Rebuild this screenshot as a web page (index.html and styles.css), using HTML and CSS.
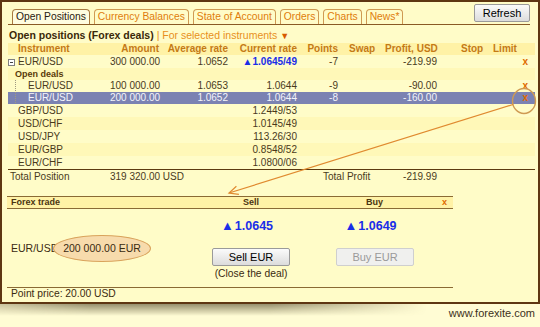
FILE: index.html
```html
<!DOCTYPE html>
<html lang="en">
<head>
    <meta charset="UTF-8">
    <title>Open Positions</title>
    <link rel="stylesheet" href="styles.css">
</head>
<body>
<div id="panel">
    <div id="tabBar">
        <div class="tab active">Open Positions</div>
        <div class="tab">Currency Balances</div>
        <div class="tab">State of Account</div>
        <div class="tab">Orders</div>
        <div class="tab">Charts</div>
        <div class="tab">News*</div>
        <button class="refresh">Refresh</button>
    </div>

    <div class="title"><b>Open positions (Forex deals)</b> <span class="filter">| For selected instruments <span class="caret">▼</span></span></div>

    <table class="positions">
        <colgroup>
            <col style="width:102px"><col style="width:53px"><col style="width:69px"><col style="width:69px">
            <col style="width:41px"><col style="width:43px"><col style="width:56px"><col style="width:47px"><col style="width:47px">
        </colgroup>
        <thead>
            <tr>
                <th class="name">Instrument</th>
                <th class="num">Amount</th>
                <th class="num">Average rate</th>
                <th class="num">Current rate</th>
                <th class="num">Points</th>
                <th class="swap">Swap</th>
                <th class="num">Profit, USD</th>
                <th class="stop">Stop</th>
                <th class="limit">Limit</th>
            </tr>
        </thead>
        <tbody>
            <tr class="main">
                <td class="name first"><span class="expander"></span>EUR/USD</td>
                <td class="num">300 000.00</td>
                <td class="num">1.0652</td>
                <td class="num rate-up">▲1.0645/49</td>
                <td class="num">-7</td>
                <td></td>
                <td class="num">-219.99</td>
                <td></td>
                <td class="close">x</td>
            </tr>
            <tr class="group alt">
                <td colspan="9" class="group-label">Open deals</td>
            </tr>
            <tr class="deal">
                <td class="name sub tree">EUR/USD</td>
                <td class="num">100 000.00</td>
                <td class="num">1.0653</td>
                <td class="num">1.0644</td>
                <td class="num">-9</td>
                <td></td>
                <td class="num">-90.00</td>
                <td></td>
                <td class="close">x</td>
            </tr>
            <tr class="deal selected">
                <td class="name sub tree">EUR/USD</td>
                <td class="num">200 000.00</td>
                <td class="num">1.0652</td>
                <td class="num">1.0644</td>
                <td class="num">-8</td>
                <td></td>
                <td class="num">-160.00</td>
                <td></td>
                <td class="close">x</td>
            </tr>
            <tr class="quote"><td class="name">GBP/USD</td><td></td><td></td><td class="num">1.2449/53</td><td colspan="5"></td></tr>
            <tr class="quote alt"><td class="name">USD/CHF</td><td></td><td></td><td class="num">1.0145/49</td><td colspan="5"></td></tr>
            <tr class="quote"><td class="name">USD/JPY</td><td></td><td></td><td class="num">113.26/30</td><td colspan="5"></td></tr>
            <tr class="quote alt"><td class="name">EUR/GBP</td><td></td><td></td><td class="num">0.8548/52</td><td colspan="5"></td></tr>
            <tr class="quote"><td class="name">EUR/CHF</td><td></td><td></td><td class="num">1.0800/06</td><td colspan="5"></td></tr>
        </tbody>
        <tfoot>
            <tr>
                <td class="total-label">Total Position</td>
                <td colspan="3">319 320.00 USD</td>
                <td colspan="2" class="profit-label">Total Profit</td>
                <td class="num">-219.99</td>
                <td colspan="2"></td>
            </tr>
        </tfoot>
    </table>

    <div id="trade">
        <div class="trade-head trade-grid">
            <span class="head-label">Forex trade</span>
            <span class="center">Sell</span>
            <span></span>
            <span class="center">Buy</span>
            <span class="head-close">x</span>
        </div>
        <div class="trade-rates trade-grid">
            <span></span>
            <span class="center big-rate"><span class="up">▲</span>1.0645</span>
            <span></span>
            <span class="center big-rate"><span class="up">▲</span>1.0649</span>
        </div>
        <div class="trade-act trade-grid">
            <div class="deal-info">EUR/USD <span class="amount">200 000.00 EUR</span></div>
            <div class="center">
                <button class="btn">Sell EUR</button>
                <div class="note">(Close the deal)</div>
            </div>
            <span></span>
            <div class="center">
                <button class="btn" disabled>Buy EUR</button>
            </div>
        </div>
    </div>
    <div class="point-price">Point price: 20.00 USD</div>

    <!-- callout from the selected deal to the trade form -->
    <svg class="callout" width="540" height="304" viewBox="0 0 540 304">
        <ellipse cx="524" cy="101" rx="11.5" ry="12.5" fill="none" stroke="#cf9a52" stroke-width="1.4"/>
        <line x1="513" y1="104.5" x2="229" y2="193" stroke="#e08a30" stroke-width="1.2"/>
        <polyline points="236.4,186.3 229,193 238.9,194.3" fill="none" stroke="#e08a30" stroke-width="1.2"/>
    </svg>
</div>
<div id="footer">
    <div class="shadow"></div>
    <div class="site">www.forexite.com</div>
</div>
</body>
</html>
```

FILE: styles.css
```css
body {
    margin: 0;
    background: #fffcd4;
    font-family: "Liberation Sans", Arial, sans-serif;
    color: #4a3a1c;
}

#panel {
    position: relative;
    height: 300px;
    border: 2px solid #5e3612;
    background: #fffcc8;
}

/* tabs */
#tabBar {
    display: flex;
    align-items: flex-end;
    gap: 4px;
    height: 22px;
    margin: 0 8px 0 6px;
    padding-left: 4px;
    border-bottom: 1px solid #8a5a24;
}
.tab {
    height: 14px;
    line-height: 14px;
    padding: 0 3px;
    border: 1px solid #cf9a52;
    border-bottom: none;
    border-radius: 4px 4px 0 0;
    font-size: 10.3px;
    color: #e07c0c;
}
.tab.active {
    color: #2a2010;
    border-color: #a87a40;
    background: #fffde0;
}
.refresh {
    align-self: flex-start;
    margin: 2px 0 0 auto;
    width: 56px;
    height: 18px;
    padding: 0;
    border: 1px solid #9a9a9a;
    border-radius: 2px;
    background: linear-gradient(#fbfbfb, #dcdcdc);
    font-family: inherit;
    font-size: 11px;
    color: #000;
}

.title {
    margin-top: 4px;
    padding-left: 7px;
    line-height: 12px;
    font-size: 10.5px;
    color: #3a2808;
}
.filter {
    color: #e8901c;
}
.caret {
    color: #d65a00;
    font-size: 9px;
}

/* positions table */
.positions {
    margin: 1px 0 0 6px;
    width: 527px;
    table-layout: fixed;
    border-collapse: collapse;
    font-size: 10px;
}
.positions th,
.positions td {
    padding: 0;
    white-space: nowrap;
    overflow: hidden;
}
.positions th {
    height: 12px;
    line-height: 12px;
    background: #fff2a6;
    color: #c47a16;
    font-weight: bold;
    text-align: left;
}
.positions .num {
    text-align: right;
    padding-right: 4px;
}
.positions th.name {
    padding-left: 10px;
}
.positions th.swap {
    padding-left: 7px;
}
.positions th.stop {
    padding-left: 20px;
}
.positions th.limit {
    padding-left: 5px;
}

.positions td {
    height: 13px;
    line-height: 13px;
}
.positions td.name {
    padding-left: 10px;
}
.positions td.first {
    padding-left: 0;
}
.positions td.sub {
    padding-left: 20px;
}
.positions tr.group td,
.positions tr.deal td {
    height: 12px;
    line-height: 12px;
}
.group-label {
    padding-left: 7px !important;
    font-size: 9px;
    font-weight: bold;
    color: #5a3a08;
}
.tree {
    background-image: repeating-linear-gradient(to bottom, #a09a80 0 1px, transparent 1px 2px);
    background-size: 1px 100%;
    background-position: 7px 0;
    background-repeat: no-repeat;
}
.alt td {
    background-color: #fff8b8;
}
.selected td {
    background-color: #7b82b2;
    color: #f4f4fa;
}
.expander {
    display: inline-block;
    box-sizing: border-box;
    width: 7px;
    height: 7px;
    margin-right: 3px;
    vertical-align: -1px;
    border: 1px solid #808080;
    background: linear-gradient(#444, #444) center / 3px 1px no-repeat, #fff;
}
.rate-up {
    color: #1a2ee8;
    font-weight: bold;
}
.positions td.close {
    text-align: right;
    padding-right: 7px;
    color: #e06a00;
    font-weight: bold;
}

.positions tfoot td {
    height: 14px;
    line-height: 14px;
    border-top: 1px solid #5c3a10;
}
.total-label {
    padding-left: 2px !important;
}
.profit-label {
    padding-left: 22px !important;
}

/* trade form */
#trade {
    margin: 12px 0 0 5px;
    width: 446px;
}
.trade-grid {
    display: grid;
    grid-template-columns: 205px 78px 46px 77px 1fr;
}
.center {
    text-align: center;
}
.trade-head {
    height: 11px;
    line-height: 11px;
    border-top: 1px solid #8a6a34;
    border-bottom: 1px solid #8a6a34;
    background: #fff2a6;
    font-size: 9px;
    font-weight: bold;
    color: #4a3410;
}
.head-label {
    padding-left: 4px;
}
.head-close {
    text-align: right;
    padding-right: 6px;
    color: #e06a00;
}
.trade-rates {
    padding-top: 9px;
    line-height: 16px;
}
.big-rate {
    font-size: 12.5px;
    font-weight: bold;
    color: #1a2ee8;
    margin-left: -8px;
    white-space: nowrap;
}
.big-rate .up {
    font-size: 13px;
    margin-right: 1px;
}
.trade-act {
    margin-top: 13px;
    padding-bottom: 8px;
    border-bottom: 1px solid #8a6a34;
}
.deal-info {
    margin-top: -12px;
    padding-left: 4px;
    line-height: 27px;
    font-size: 10.5px;
    color: #3a2a10;
}
.amount {
    display: inline-block;
    height: 25px;
    line-height: 25px;
    margin-left: -8px;
    padding: 0 9px;
    border: 1px solid #d9a35c;
    border-radius: 50%;
    background: #f7dbac;
}
.btn {
    width: 78px;
    height: 18px;
    padding: 0;
    border: 1px solid #9a9a9a;
    border-radius: 2px;
    background: linear-gradient(#fbfbfb, #dcdcdc);
    font-family: inherit;
    font-size: 11px;
    color: #000;
}
.btn:disabled {
    border-color: #cfcfcf;
    background: #f0f0ee;
    color: #9a9a9a;
}
.note {
    margin-top: 3px;
    line-height: 10px;
    font-size: 10.3px;
    color: #3a2a10;
}
.point-price {
    padding-left: 9px;
    line-height: 12px;
    font-size: 10.3px;
    color: #3a2a10;
}

.callout {
    position: absolute;
    left: -2px;
    top: -2px;
    pointer-events: none;
}

/* footer with drop shadow */
#footer {
    display: flex;
    height: 23px;
}
.shadow {
    flex: 1;
    height: 12px;
    background: linear-gradient(to bottom, rgba(80, 70, 40, 0.6), rgba(80, 70, 40, 0));
    -webkit-mask-image: linear-gradient(to right, rgba(0, 0, 0, 0.5), #000 20%, #000 60%, transparent 95%);
    mask-image: linear-gradient(to right, rgba(0, 0, 0, 0.5), #000 20%, #000 60%, transparent 95%);
}
.site {
    margin-top: 3px;
    padding: 0 5px 0 0;
    line-height: 12px;
    font-size: 11px;
    color: #3c3020;
}
```
